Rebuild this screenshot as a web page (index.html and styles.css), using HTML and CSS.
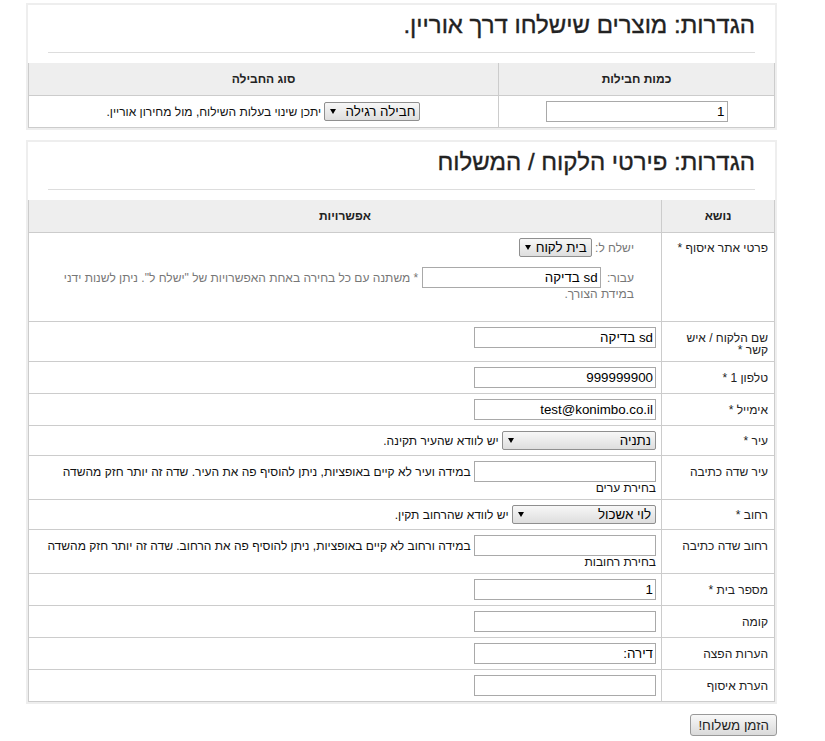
FILE: index.html
```html
<!DOCTYPE html>
<html lang="he" dir="rtl">
<head>
    <meta charset="UTF-8">
    <meta name="viewport" content="width=device-width, initial-scale=1.0">
    <title>הגדרות משלוח - אוריין</title>
    <link rel="stylesheet" href="styles.css">
</head>
<body>
<div class="page">

    <div class="box">
        <h2 class="box-title">הגדרות: מוצרים שישלחו דרך אוריין.</h2>
        <table class="grid">
            <colgroup><col class="col-qty"><col></colgroup>
            <tr>
                <th>כמות חבילות</th>
                <th>סוג החבילה</th>
            </tr>
            <tr>
                <td class="center"><input class="field" type="text" value="1"></td>
                <td class="center">
                    <span class="select-wrap"><select class="sel sel-package">
                        <option>חבילה רגילה</option>
                        <option>חבילה גדולה</option>
                    </select></span>
                    יתכן שינוי בעלות השילוח, מול מחירון אוריין.
                </td>
            </tr>
        </table>
    </div>

    <div class="box">
        <h2 class="box-title">הגדרות: פירטי הלקוח / המשלוח</h2>
        <table class="grid">
            <colgroup><col class="col-subject"><col></colgroup>
            <tr>
                <th>נושא</th>
                <th>אפשרויות</th>
            </tr>
            <tr>
                <td class="label">פרטי אתר איסוף *</td>
                <td>
                    <div class="pickup">
                        <div class="ship-to">
                            <span class="muted">ישלח ל:</span>
                            <span class="select-wrap"><select class="sel sel-ship">
                                <option>בית לקוח</option>
                                <option>סניף</option>
                            </select></span>
                        </div>
                        <div class="for-line">
                            <span class="muted">עבור:</span>
                            <input class="field field-short" type="text" value="sd בדיקה">
                            <span class="muted">* משתנה עם כל בחירה באחת האפשרויות של "ישלח ל". ניתן לשנות ידני במידת הצורך.</span>
                        </div>
                    </div>
                </td>
            </tr>
            <tr>
                <td class="label">שם הלקוח / איש קשר *</td>
                <td><input class="field" type="text" value="sd בדיקה"></td>
            </tr>
            <tr>
                <td class="label">טלפון 1 *</td>
                <td><input class="field" type="text" value="999999900"></td>
            </tr>
            <tr>
                <td class="label">אימייל *</td>
                <td><input class="field" type="text" value="test@konimbo.co.il"></td>
            </tr>
            <tr>
                <td class="label">עיר *</td>
                <td>
                    <span class="select-wrap"><select class="sel sel-city">
                        <option>נתניה</option>
                        <option>תל אביב - יפו</option>
                    </select></span>
                    יש לוודא שהעיר תקינה.
                </td>
            </tr>
            <tr>
                <td class="label">עיר שדה כתיבה</td>
                <td>
                    <input class="field" type="text" value="">
                    במידה ועיר לא קיים באופציות, ניתן להוסיף פה את העיר. שדה זה יותר חזק מהשדה בחירת ערים
                </td>
            </tr>
            <tr>
                <td class="label">רחוב *</td>
                <td>
                    <span class="select-wrap"><select class="sel sel-street">
                        <option>לוי אשכול</option>
                        <option>הרצל</option>
                    </select></span>
                    יש לוודא שהרחוב תקין.
                </td>
            </tr>
            <tr>
                <td class="label">רחוב שדה כתיבה</td>
                <td>
                    <input class="field" type="text" value="">
                    במידה ורחוב לא קיים באופציות, ניתן להוסיף פה את הרחוב. שדה זה יותר חזק מהשדה בחירת רחובות
                </td>
            </tr>
            <tr>
                <td class="label">מספר בית *</td>
                <td><input class="field" type="text" value="1"></td>
            </tr>
            <tr>
                <td class="label">קומה</td>
                <td><input class="field" type="text" value=""></td>
            </tr>
            <tr>
                <td class="label">הערות הפצה</td>
                <td><input class="field" type="text" value="דירה:"></td>
            </tr>
            <tr>
                <td class="label">הערת איסוף</td>
                <td><input class="field" type="text" value=""></td>
            </tr>
        </table>
    </div>

    <div class="actions">
        <button class="submit" type="button">הזמן משלוח!</button>
    </div>

</div>
</body>
</html>
```

FILE: styles.css
```css
body {
    margin: 0;
    font-family: "Liberation Sans", Arial, sans-serif;
    font-size: 12px;
    line-height: 12px;
    color: #111;
    background-color: #fff;
}
.page {
    margin: 3px 48px 0 26px;
}
.box {
    border: 2px solid #eee;
    background-color: #fff;
    margin-bottom: 10px;
}
.box-title {
    margin: 0 20px;
    padding: 6px 0 13px;
    font-size: 24px;
    line-height: 28px;
    font-weight: normal;
    color: #222;
    -webkit-text-stroke: 0.35px #222;
    border-bottom: 1px solid #ddd;
}
.grid {
    width: 100%;
    margin-top: 10px;
    border-collapse: collapse;
    table-layout: fixed;
}
.grid .col-qty {
    width: 276px;
}
.grid .col-subject {
    width: 113px;
}
.grid th {
    background-color: #eee;
    font-size: 12px;
    line-height: 12px;
    color: #222;
    padding: 10px 5px;
    border: 1px solid #ccc;
    border-top: 0;
    text-align: center;
}
.grid td {
    border: 1px solid #ccc;
    padding: 5px;
    text-align: right;
    vertical-align: baseline;
}
.grid td.center {
    text-align: center;
    vertical-align: middle;
}
.grid td.label {
    padding-right: 6px;
    color: #222;
}
.muted {
    color: #777;
}
.pickup {
    padding-right: 22px;
}
.ship-to {
    margin-bottom: 10px;
}
.for-line {
    margin-bottom: 16px;
}
.field {
    width: 182px;
    height: 21px;
    box-sizing: border-box;
    margin: 0;
    padding: 1px 2px;
    border: 1px solid #a9a9a9;
    background-color: #fff;
    font-family: "Liberation Sans", Arial, sans-serif;
    font-size: 13.33px;
    color: #000;
}
.field-short {
    width: 179px;
    margin-right: 3px;
}
.select-wrap {
    position: relative;
    display: inline-block;
}
.select-wrap::after {
    content: "";
    position: absolute;
    left: 6px;
    top: 7px;
    border-left: 3px solid transparent;
    border-right: 3px solid transparent;
    border-top: 5px solid #000;
    pointer-events: none;
}
.sel {
    -webkit-appearance: none;
    appearance: none;
    height: 19px;
    box-sizing: border-box;
    margin: 0;
    padding: 0 4px 0 16px;
    border: 1px solid #8f8f8f;
    border-radius: 2px;
    background: linear-gradient(#f7f7f7, #dedede);
    font-family: "Liberation Sans", Arial, sans-serif;
    font-size: 13.33px;
    color: #000;
}
.sel-package {
    width: 96px;
}
.sel-ship {
    width: 73px;
}
.sel-city {
    width: 154px;
}
.sel-street {
    width: 144px;
}
.actions {
    overflow: hidden;
}
.submit {
    height: 22px;
    padding: 0 7px;
    border: 1px solid #999;
    border-radius: 3px;
    background: linear-gradient(#f8f8f8, #dadada);
    font-family: "Liberation Sans", Arial, sans-serif;
    font-size: 13.33px;
    color: #222;
}
```
